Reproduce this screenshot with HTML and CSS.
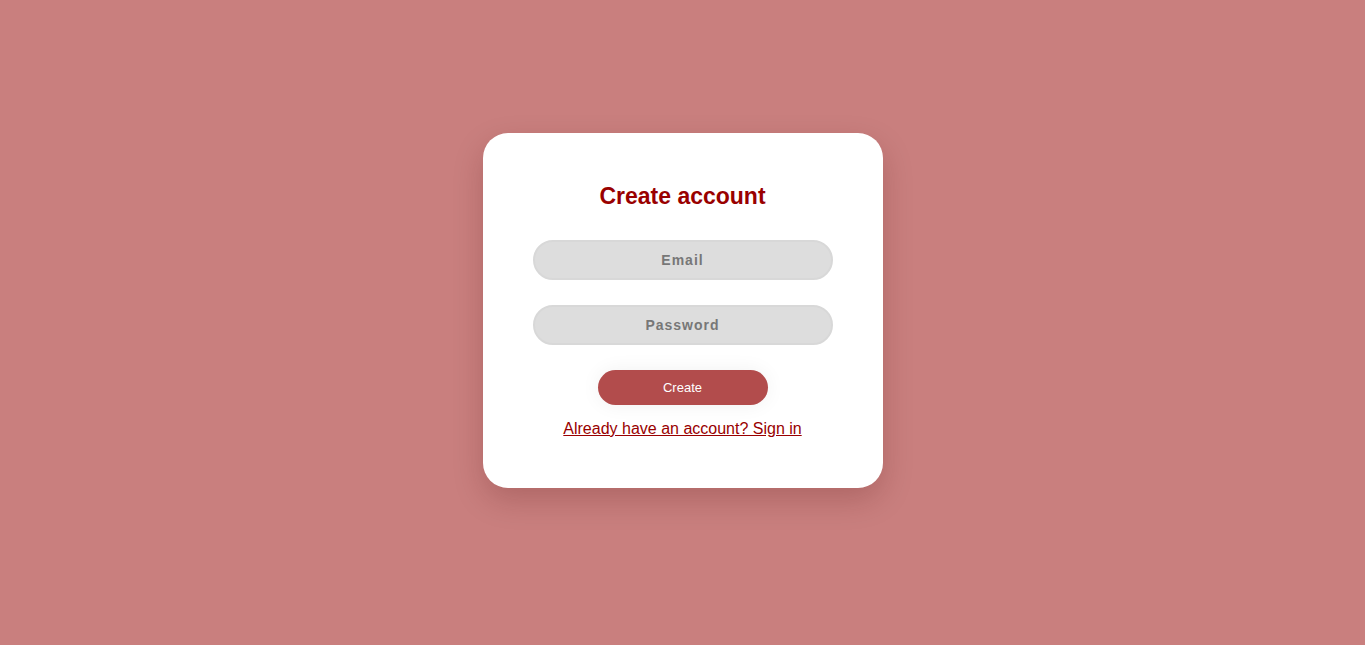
FILE: index.html
```html
<!DOCTYPE html>
<html lang="en">
<head>
<meta charset="utf-8">
<title>Create account</title>
<link rel="stylesheet" href="styles.css">
</head>
<body>
<main class="page">
  <form class="card">
    <h2 class="title">Create account</h2>
    <input class="field" type="email" placeholder="Email">
    <input class="field" type="password" placeholder="Password">
    <button class="btn" type="button">Create</button>
    <a class="link" href="#">Already have an account? Sign in</a>
  </form>
</main>
</body>
</html>
```

FILE: styles.css
```css
* { box-sizing: border-box; }
html, body { margin: 0; padding: 0; }
body {
  background: #c97f7e;
  font-family: "Liberation Sans", Arial, sans-serif;
}
.page {
  min-height: 100vh;
  display: flex;
  align-items: center;
  justify-content: center;
  padding-bottom: 24px;
}
.card {
  width: 400px;
  background: #ffffff;
  border-radius: 25px;
  padding: 49px 50px 50px;
  display: flex;
  flex-direction: column;
  align-items: center;
  box-shadow: 0 12px 30px rgba(80, 20, 20, 0.22);
}
.title {
  margin: 0 0 30px;
  font-size: 23px;
  line-height: 28px;
  font-weight: bold;
  color: #990000;
}
.field {
  width: 300px;
  height: 40px;
  margin: 0 0 25px;
  border: 2px solid #d8d8d8;
  border-radius: 20px;
  background: #dddddd;
  text-align: center;
  font-family: "Liberation Sans", Arial, sans-serif;
  font-size: 14px;
  font-weight: bold;
  letter-spacing: 1px;
  color: #555;
  outline: none;
}
.field::placeholder {
  color: #777777;
  opacity: 1;
}
.btn {
  width: 170px;
  height: 35px;
  border: none;
  border-radius: 18px;
  background: #b24c4c;
  color: #ffffff;
  font-family: "Liberation Sans", Arial, sans-serif;
  font-size: 13px;
  box-shadow: 0 0 20px rgba(0, 0, 0, 0.06);
  cursor: pointer;
}
.link {
  margin-top: 15px;
  font-size: 16px;
  line-height: 18px;
  color: #990000;
  text-decoration: underline;
}
```
